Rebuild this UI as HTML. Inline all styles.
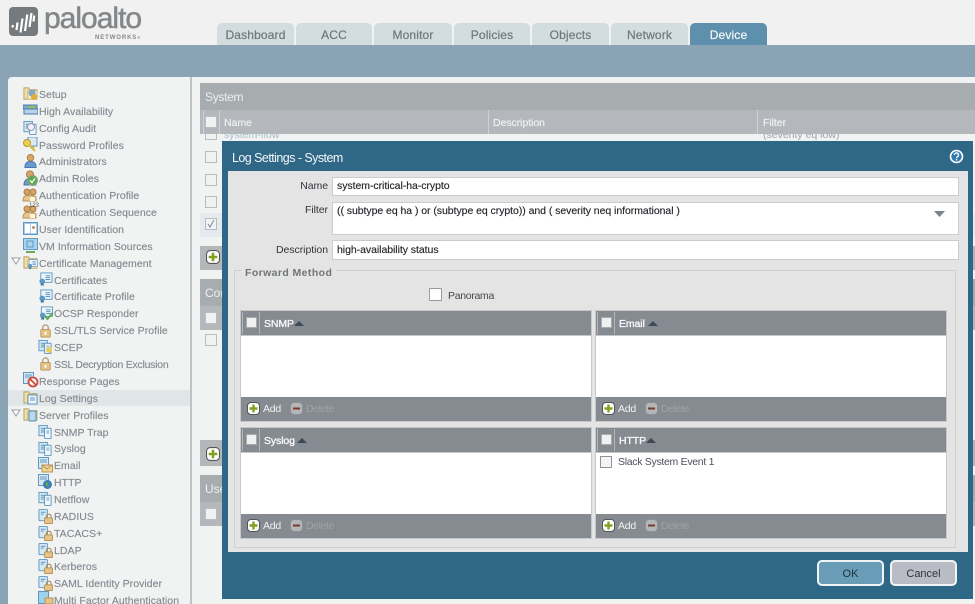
<!DOCTYPE html>
<html><head><meta charset="utf-8">
<style>
html,body{margin:0;padding:0;height:604px;overflow:hidden}
body{width:975px;height:604px;overflow:hidden;position:relative;background:#8aa4b6;font-family:"Liberation Sans",sans-serif;filter:blur(.3px)}
div,span,svg{position:absolute;box-sizing:border-box}
.t{white-space:nowrap;line-height:14px}
.tab{top:23px;height:22px;width:77px;background:#d3dcdf;border-radius:5px 5px 0 0;color:#70777c;font-size:12px;letter-spacing:.15px;text-align:center;line-height:24px;-webkit-text-stroke:.2px #70777c}
.nav{font-size:10.5px;letter-spacing:.05px;margin-top:1px;color:#858a90;white-space:nowrap;line-height:14px;-webkit-text-stroke:.15px #858a90}
.cb{width:12px;height:12px;background:#f1f2f2;border:1px solid #b9bcbe}
.inp{left:332px;width:627px;background:#fff;border:1px solid #ccc;font-size:10.5px;letter-spacing:-.05px;color:#26262c;padding-left:4px;white-space:nowrap;-webkit-text-stroke:.15px #26262c}
.lab{font-size:10.5px;color:#33333a;text-align:right;right:647px;white-space:nowrap;line-height:14px;letter-spacing:-.05px}
.grid{background:#fff;border:1px solid #c6c8ca}
.gh{left:0;right:0;top:0;height:25px;background:#858b91;border-bottom:1px solid #c3c6c9}
.gf{left:0;right:0;bottom:0;height:24px;background:#858b91}
.gcb{left:5px;top:6px;width:11px;height:11px;background:#f0f0f0;border:1px solid #aaa}
.sep{left:18px;top:1px;width:1px;height:22px;background:#b3b7ba}
.sep0{left:1px;top:1px;width:1px;height:22px;background:#b3b7ba}
.gt{left:23px;top:6px;font-size:10.5px;color:#f6f8fa;white-space:nowrap;line-height:14px;-webkit-text-stroke:.35px #f6f8fa;letter-spacing:-.1px}
.tri{width:0;height:0;border-left:5px solid transparent;border-right:5px solid transparent;border-bottom:5px solid #3d4a55;top:10px}
.add{left:6px;top:5px;width:13px;height:13px}
.addt{left:22px;top:5px;font-size:10.5px;color:#f0f2f4;line-height:14px;letter-spacing:-.25px}
.del{left:49px;top:5px;width:13px;height:13px}
.delt{left:65px;top:5px;font-size:10.5px;color:#9ea3a8;line-height:14px;letter-spacing:-.4px}
.col{top:110px;height:24px;font-size:10.5px;color:#eef0f1;line-height:26px;letter-spacing:-.05px;-webkit-text-stroke:.2px #eef0f1}
</style></head><body>
<svg width="0" height="0" style="left:0;top:0">
<defs>
<symbol id="plus" viewBox="0 0 13 13"><rect x=".5" y=".5" width="12" height="12" rx="3.5" fill="#fff" stroke="#555"/><path d="M6.5 2.5v8M2.5 6.500h8" stroke="#82a121" stroke-width="2.400"/></symbol>
<symbol id="minus" viewBox="0 0 13 13"><rect x=".5" y=".5" width="12" height="12" rx="3.5" fill="#b4b6b8" stroke="#8d9094"/><path d="M3 6.500h7" stroke="#7a3a2e" stroke-width="2"/></symbol>
<symbol id="doc" viewBox="0 0 16 16"><rect x="1" y="1" width="9" height="11" fill="#d7e8f3" stroke="#5f98c0"/><path d="M3 4h5M3 6h5M3 8h5" stroke="#5f98c0"/><rect x="7" y="4" width="7" height="11" rx="1" fill="#eef6fb" stroke="#5f98c0"/><path d="M9 7h3M9 9h3" stroke="#5f98c0"/></symbol>
<symbol id="cert" viewBox="0 0 16 16"><rect x="3" y="1" width="12" height="10" fill="#eef6fb" stroke="#5f98c0"/><path d="M8 4h5M8 6h5M8 8h5" stroke="#5f98c0"/><circle cx="4.500" cy="10" r="3" fill="#5f98c0"/><path d="M3 12v3l1.500-1 1.500 1v-3" fill="#3d78a0"/></symbol>
<symbol id="lock" viewBox="0 0 16 16"><path d="M5 8V5a3 3 0 0 1 6 0v3" fill="none" stroke="#b7a582" stroke-width="1.500"/><rect x="3" y="7" width="10" height="8" rx="1" fill="#e6c486" stroke="#b5935a"/><rect x="7" y="9.500" width="2" height="3" fill="#fff"/></symbol>
<symbol id="slock" viewBox="0 0 16 16"><rect x="1" y="1" width="9" height="12" rx="1" fill="#d7e8f3" stroke="#5f98c0"/><path d="M3 4h5M3 6h3" stroke="#5f98c0"/><path d="M9 10V8.500a2.500 2.500 0 0 1 5 0V10" fill="none" stroke="#a58a58" stroke-width="1.200"/><rect x="7" y="10" width="8.500" height="6" rx="1" fill="#e6c486" stroke="#b5935a"/></symbol>
<symbol id="folder" viewBox="0 0 16 16"><path d="M1 14V2h5l1 2h8v10z" fill="#f1dfa8" stroke="#b5a065"/><rect x="5" y="5" width="10" height="9" fill="#f6ecc9" stroke="#c8b67d"/></symbol>
<symbol id="person" viewBox="0 0 16 16"><circle cx="8" cy="4.500" r="3.500" fill="#d9a566" stroke="#a87b43"/><path d="M2 15c0-5 3-6.500 6-6.500s6 1.500 6 6.500z" fill="#6b9bd0" stroke="#4876a8"/></symbol>
<symbol id="two" viewBox="0 0 16 16"><circle cx="5" cy="5" r="3" fill="#d9a566" stroke="#a87b43"/><circle cx="11" cy="5" r="3" fill="#d9a566" stroke="#a87b43"/><path d="M1 14c0-4 2-5.500 4-5.500s7 0 9 1.500v4z" fill="#e8c68c" stroke="#b5935a"/></symbol>
</defs></svg>

<!-- header -->
<div style="left:0;top:0;width:975px;height:45px;background:#f0f1f0"></div>
<svg style="left:9px;top:7px" width="30" height="30" viewBox="0 0 30 30"><rect width="29" height="29" rx="4" fill="#777a7c"/><path d="M3.500 20.500l.4-2.500M7.500 23l1-7.500M11.500 25.500l2-14M16 24l2.300-16.500M20.500 20l2-14M24.500 14.500l.7-6" stroke="#fff" stroke-width="2.200" fill="none"/></svg>
<div class="t" style="left:44px;top:0;font-size:30px;line-height:38px;color:#84878a;letter-spacing:-1px;-webkit-text-stroke:.5px #84878a">paloalto</div>
<div class="t" style="left:95px;top:34px;font-size:6px;line-height:8px;letter-spacing:.9px;color:#85888a;font-weight:bold">NETWORKS<span style="position:static;font-size:4px">®</span></div>
<div class="tab" style="left:217px">Dashboard</div>
<div class="tab" style="left:296px;width:76px">ACC</div>
<div class="tab" style="left:374px;width:78px">Monitor</div>
<div class="tab" style="left:454px;width:76px">Policies</div>
<div class="tab" style="left:532px">Objects</div>
<div class="tab" style="left:611px">Network</div>
<div class="tab" style="left:690px;background:#5e90ae;color:#f4f7f9;-webkit-text-stroke:.2px #f4f7f9">Device</div>

<!-- sidebar -->
<div style="left:8px;top:77px;width:182px;height:527px;background:#f1f3f3;border-radius:4px 0 0 0"></div>
<div style="left:190px;top:77px;width:2px;height:527px;background:#c0c3c5"></div>
<div style="left:192px;top:77px;width:783px;height:527px;background:#f1f2f2"></div>
<div style="left:8px;top:390px;width:182px;height:16px;background:#e1e6e8"></div>

<svg style="left:11px;top:257px" width="10" height="8"><path d="M1 1h8L5 7z" fill="#fff" stroke="#9a9da0"/></svg>
<svg style="left:11px;top:409px" width="10" height="8"><path d="M1 1h8L5 7z" fill="#fff" stroke="#9a9da0"/></svg>

<!-- icons level 1 -->
<svg style="left:23px;top:86px" width="15" height="15"><use href="#folder"/><circle cx="9" cy="7" r="3.500" fill="#7da6c8"/><circle cx="11" cy="11" r="3" fill="#e2a93b"/></svg>
<svg style="left:23px;top:104px" width="15" height="13"><rect x="0" y="1" width="14" height="4" fill="#7fa8cc" stroke="#4d7ea8"/><rect x="1" y="5" width="14" height="5" fill="#b9d2e6" stroke="#4d7ea8"/><path d="M6 3h6" stroke="#9cc04a" stroke-width="2"/></svg>
<svg style="left:23px;top:120px" width="15" height="16"><use href="#doc"/><circle cx="8" cy="7" r="3.500" fill="#eef" stroke="#8f98a0"/></svg>
<svg style="left:23px;top:137px" width="15" height="15"><rect x="5" y="0" width="9" height="9" fill="#dbe9f3" stroke="#5f98c0"/><circle cx="4" cy="6" r="3.500" fill="#edd04e" stroke="#b8982c"/><path d="M6 8l6 6M9 12l2-2" stroke="#d8b83a" stroke-width="2"/></svg>
<svg style="left:23px;top:153px" width="15" height="16"><use href="#person"/></svg>
<svg style="left:22px;top:170px" width="16" height="16"><use href="#person"/><circle cx="10.500" cy="10.500" r="5" fill="#5cab4b" stroke="#9a9a9a"/><path d="M8 10.500l2 2 3-4" stroke="#fff" fill="none" stroke-width="1.300"/></svg>
<svg style="left:22px;top:187px" width="16" height="16"><use href="#two"/><rect x="8" y="10" width="5" height="4" fill="#fff5dc"/></svg>
<svg style="left:22px;top:204px" width="16" height="16"><use href="#two"/><rect x="8" y="10" width="5" height="4" fill="#fff5dc"/></svg>
<div class="t" style="left:29px;top:203px;font-size:6px;line-height:7px;color:#555">123</div>
<svg style="left:23px;top:222px" width="15" height="14"><rect x=".5" y=".5" width="14" height="12" fill="#a9cbe3" stroke="#5f98c0"/><rect x="2" y="2" width="5" height="9" fill="#fff"/><rect x="8" y="2" width="5" height="9" fill="#fff"/><circle cx="10.500" cy="5.500" r="1.500" fill="#c08a5a"/></svg>
<svg style="left:23px;top:238px" width="15" height="16"><rect x=".5" y=".5" width="14" height="11" fill="#a9d3ee" stroke="#5f98c0"/><rect x="4" y="3" width="6" height="6" fill="none" stroke="#5f98c0"/><path d="M3 14h9" stroke="#6ea85a" stroke-width="2"/></svg>
<svg style="left:23px;top:255px" width="15" height="15"><use href="#folder"/><use href="#cert" x="4" y="4" width="11" height="11"/></svg>
<svg style="left:38px;top:272px" width="15" height="15"><use href="#cert"/></svg>
<svg style="left:38px;top:289px" width="15" height="15"><use href="#cert"/></svg>
<svg style="left:38px;top:306px" width="16" height="15"><use href="#cert"/><path d="M7 10l2.500 3 5-6" stroke="#5caa4a" stroke-width="2" fill="none"/></svg>
<svg style="left:38px;top:323px" width="15" height="15"><use href="#lock"/></svg>
<svg style="left:38px;top:339px" width="15" height="16"><use href="#doc"/><circle cx="11" cy="11" r="3" fill="#e8cf5e"/></svg>
<svg style="left:38px;top:356px" width="15" height="15"><use href="#lock"/></svg>
<svg style="left:23px;top:372px" width="16" height="16"><rect x=".5" y=".5" width="10" height="11" fill="#d7e8f3" stroke="#5f98c0"/><path d="M2 3h7M2 5h7" stroke="#5f98c0"/><circle cx="10" cy="10" r="4.500" fill="#fff" stroke="#d0493a" stroke-width="1.800"/><path d="M7 7l6 6" stroke="#d0493a" stroke-width="1.800"/></svg>
<svg style="left:23px;top:390px" width="15" height="15"><use href="#folder"/><rect x="5" y="5" width="9" height="9" fill="#eef6fb" stroke="#5f98c0"/><path d="M7 8h5M7 10h5" stroke="#5f98c0"/></svg>
<svg style="left:23px;top:407px" width="15" height="15"><use href="#folder"/><rect x="6" y="4" width="7" height="10" rx="1" fill="#bcd9ec" stroke="#4f8ab4"/></svg>
<svg style="left:38px;top:424px" width="15" height="16"><use href="#doc"/></svg>
<svg style="left:38px;top:441px" width="15" height="16"><use href="#doc"/></svg>
<svg style="left:38px;top:457px" width="15" height="16"><rect x=".5" y=".5" width="10" height="11" fill="#d7e8f3" stroke="#5f98c0"/><path d="M2 3h7M2 5h7" stroke="#5f98c0"/><rect x="4" y="8" width="10.500" height="7" fill="#f3d48e" stroke="#b5935a"/><path d="M4 8l5 4 5-4" fill="none" stroke="#b5935a"/></svg>
<svg style="left:38px;top:474px" width="15" height="16"><rect x=".5" y=".5" width="10" height="11" fill="#d7e8f3" stroke="#5f98c0"/><path d="M2 3h7M2 5h7" stroke="#5f98c0"/><circle cx="9.500" cy="10.500" r="4.500" fill="#3c7fb8"/><path d="M7 8l3 1 1 3-2 1z" fill="#6aa845"/></svg>
<svg style="left:38px;top:491px" width="15" height="16"><use href="#doc"/></svg>
<svg style="left:38px;top:508px" width="15" height="16"><use href="#slock"/></svg>
<svg style="left:38px;top:525px" width="15" height="16"><use href="#slock"/></svg>
<svg style="left:38px;top:542px" width="15" height="16"><use href="#slock"/></svg>
<svg style="left:38px;top:558px" width="15" height="16"><use href="#slock"/></svg>
<svg style="left:38px;top:575px" width="15" height="16"><use href="#slock"/></svg>
<svg style="left:38px;top:591px" width="16" height="13"><rect x=".5" y=".5" width="10" height="12" fill="#9ed2ec" stroke="#5f98c0"/><rect x="7" y="7" width="8" height="6" fill="#e6c486" stroke="#b5935a"/></svg>

<div class="nav" style="left:39px;top:87px">Setup</div>
<div class="nav" style="left:39px;top:104px">High Availability</div>
<div class="nav" style="left:39px;top:121px">Config Audit</div>
<div class="nav" style="left:39px;top:138px">Password Profiles</div>
<div class="nav" style="left:39px;top:154px">Administrators</div>
<div class="nav" style="left:39px;top:171px">Admin Roles</div>
<div class="nav" style="left:39px;top:188px">Authentication Profile</div>
<div class="nav" style="left:39px;top:205px">Authentication Sequence</div>
<div class="nav" style="left:39px;top:222px">User Identification</div>
<div class="nav" style="left:39px;top:239px">VM Information Sources</div>
<div class="nav" style="left:39px;top:256px">Certificate Management</div>
<div class="nav" style="left:54px;top:273px">Certificates</div>
<div class="nav" style="left:54px;top:289px">Certificate Profile</div>
<div class="nav" style="left:54px;top:306px">OCSP Responder</div>
<div class="nav" style="left:54px;top:323px">SSL/TLS Service Profile</div>
<div class="nav" style="left:54px;top:340px">SCEP</div>
<div class="nav" style="left:54px;top:357px;letter-spacing:-.25px">SSL Decryption Exclusion</div>
<div class="nav" style="left:39px;top:374px">Response Pages</div>
<div class="nav" style="left:39px;top:391px">Log Settings</div>
<div class="nav" style="left:39px;top:408px">Server Profiles</div>
<div class="nav" style="left:54px;top:425px">SNMP Trap</div>
<div class="nav" style="left:54px;top:441px">Syslog</div>
<div class="nav" style="left:54px;top:458px">Email</div>
<div class="nav" style="left:54px;top:475px">HTTP</div>
<div class="nav" style="left:54px;top:492px">Netflow</div>
<div class="nav" style="left:54px;top:509px">RADIUS</div>
<div class="nav" style="left:54px;top:526px">TACACS+</div>
<div class="nav" style="left:54px;top:543px">LDAP</div>
<div class="nav" style="left:54px;top:559px">Kerberos</div>
<div class="nav" style="left:54px;top:576px">SAML Identity Provider</div>
<div class="nav" style="left:54px;top:593px">Multi Factor Authentication</div>

<!-- background panel -->
<div style="left:200px;top:83px;width:775px;height:27px;background:#a7acaf;color:#eef0f1;font-size:12px;letter-spacing:-.3px;line-height:28px;padding-left:5px">System</div>
<div style="left:200px;top:110px;width:775px;height:24px;background:#b4b7bb"></div>
<div style="left:203px;top:110px;width:1px;height:24px;background:#cfd2d4"></div>
<div style="left:219px;top:110px;width:1px;height:24px;background:#cfd2d4"></div>
<div style="left:488px;top:110px;width:1px;height:24px;background:#cfd2d4"></div>
<div style="left:757px;top:110px;width:1px;height:24px;background:#cfd2d4"></div>
<div class="cb" style="left:205px;top:116px"></div>
<div class="col" style="left:224px">Name</div>
<div class="col" style="left:493px">Description</div>
<div class="col" style="left:763px">Filter</div>
<div style="left:200px;top:134px;width:775px;height:7px;overflow:hidden;background:#f1f2f2">
  <div class="cb" style="left:5px;top:-6px"></div>
  <div class="t" style="left:24px;top:-6px;font-size:10.5px;color:#a5bdd0">system-flow</div>
  <div class="t" style="left:563px;top:-6px;font-size:10.5px;color:#a0a4a8">(severity eq low)</div>
</div>
<div style="left:200px;top:213px;width:775px;height:24px;background:#e4eaee"></div>
<div class="cb" style="left:205px;top:151px"></div>
<div class="cb" style="left:205px;top:174px"></div>
<div class="cb" style="left:205px;top:196px"></div>
<div class="cb" style="left:205px;top:218px"></div>
<svg style="left:206px;top:219px" width="10" height="10"><path d="M2 5l2 3 4-7" stroke="#8c97b5" fill="none" stroke-width="1.200"/></svg>
<div style="left:200px;top:246px;width:775px;height:24px;background:#b4b7ba"></div>
<svg style="left:206px;top:250px" width="14" height="14"><use href="#plus"/></svg>
<div style="left:200px;top:279px;width:775px;height:27px;background:#a7acaf;color:#eef0f1;font-size:12px;line-height:28px;padding-left:5px">Config</div>
<div style="left:200px;top:306px;width:775px;height:24px;background:#b4b7bb"></div>
<div class="cb" style="left:205px;top:312px"></div>
<div class="cb" style="left:205px;top:334px"></div>
<div style="left:200px;top:440px;width:775px;height:26px;background:#b4b7ba"></div>
<svg style="left:206px;top:447px" width="14" height="14"><use href="#plus"/></svg>
<div style="left:200px;top:475px;width:775px;height:27px;background:#a7acaf;color:#eef0f1;font-size:12px;line-height:28px;padding-left:5px">User</div>
<div style="left:200px;top:502px;width:775px;height:24px;background:#b4b7bb"></div>
<div class="cb" style="left:205px;top:508px"></div>

<!-- modal -->
<div style="left:222px;top:141px;width:751px;height:458px;background:#2f6786"></div>
<div class="t" style="left:232px;top:150px;font-size:12.5px;letter-spacing:-.55px;line-height:16px;color:#f2f6f9">Log Settings - System</div>
<svg style="left:949px;top:149px" width="15" height="15"><circle cx="7.500" cy="7.500" r="6" fill="#2e78ad" stroke="#fff" stroke-width="1.600"/><path d="M5.500 6a2 2 0 1 1 3 1.700c-.7.400-1 .7-1 1.500" fill="none" stroke="#fff" stroke-width="1.300"/><rect x="6.800" y="10" width="1.500" height="1.500" fill="#fff"/></svg>
<div style="left:228px;top:171px;width:740px;height:381px;background:#e4e4e4"></div>

<div class="lab" style="top:179px">Name</div>
<div class="inp" style="top:177px;height:19px;line-height:17px">system-critical-ha-crypto</div>
<div class="lab" style="top:203px">Filter</div>
<div class="inp" style="top:202px;height:33px;line-height:17px">(( subtype eq ha ) or (subtype eq crypto)) and ( severity neq informational )</div>
<svg style="left:934px;top:210px" width="12" height="8"><path d="M0 1h11L5.500 7z" fill="#7b838b"/></svg>
<div class="lab" style="top:243px">Description</div>
<div class="inp" style="top:240px;height:20px;line-height:18px">high-availability status</div>

<div style="left:234px;top:270px;width:722px;height:278px;border:1px solid #cfcfcf"></div>
<div class="t" style="left:241px;top:266px;padding:0 4px;background:#e4e4e4;font-size:10.5px;font-weight:bold;letter-spacing:.4px;color:#6f7579">Forward Method</div>
<div style="left:429px;top:288px;width:13px;height:13px;background:#fff;border:1px solid #9a9a9a;border-radius:1px"></div>
<div class="t" style="left:448px;top:289px;font-size:10.5px;letter-spacing:-.3px;color:#44464c">Panorama</div>

<div class="grid" style="left:240px;top:310px;width:352px;height:112px">
 <div class="gh"><div class="sep0"></div><div class="gcb"></div><div class="sep"></div><div class="gt">SNMP</div><div class="tri" style="left:53px"></div></div>
 <div class="gf"><svg class="add"><use href="#plus"/></svg><div class="addt">Add</div><svg class="del"><use href="#minus"/></svg><div class="delt">Delete</div></div>
</div>
<div class="grid" style="left:595px;top:310px;width:352px;height:112px">
 <div class="gh"><div class="sep0"></div><div class="gcb"></div><div class="sep"></div><div class="gt">Email</div><div class="tri" style="left:52px"></div></div>
 <div class="gf"><svg class="add"><use href="#plus"/></svg><div class="addt">Add</div><svg class="del"><use href="#minus"/></svg><div class="delt">Delete</div></div>
</div>
<div class="grid" style="left:240px;top:427px;width:352px;height:112px">
 <div class="gh"><div class="sep0"></div><div class="gcb"></div><div class="sep"></div><div class="gt">Syslog</div><div class="tri" style="left:56px"></div></div>
 <div class="gf"><svg class="add"><use href="#plus"/></svg><div class="addt">Add</div><svg class="del"><use href="#minus"/></svg><div class="delt">Delete</div></div>
</div>
<div class="grid" style="left:595px;top:427px;width:352px;height:112px">
 <div class="gh"><div class="sep0"></div><div class="gcb"></div><div class="sep"></div><div class="gt">HTTP</div><div class="tri" style="left:50px"></div></div>
 <div class="cb" style="left:4px;top:28px;background:#f4f4f4;border-color:#909498"></div>
 <div class="t" style="left:22px;top:27px;font-size:10.5px;letter-spacing:-.3px;color:#4b4f5a">Slack System Event 1</div>
 <div class="gf"><svg class="add"><use href="#plus"/></svg><div class="addt">Add</div><svg class="del"><use href="#minus"/></svg><div class="delt">Delete</div></div>
</div>

<div style="left:817px;top:560px;width:67px;height:26px;background:#689cb7;border:2px solid #f2f5f7;border-radius:5px;font-size:11px;color:#22313c;text-align:center;line-height:25px">OK</div>
<div style="left:890px;top:560px;width:67px;height:26px;background:#b9bcc4;border:2px solid #f2f5f7;border-radius:5px;font-size:11px;color:#2f3338;text-align:center;line-height:25px">Cancel</div>
</body></html>
